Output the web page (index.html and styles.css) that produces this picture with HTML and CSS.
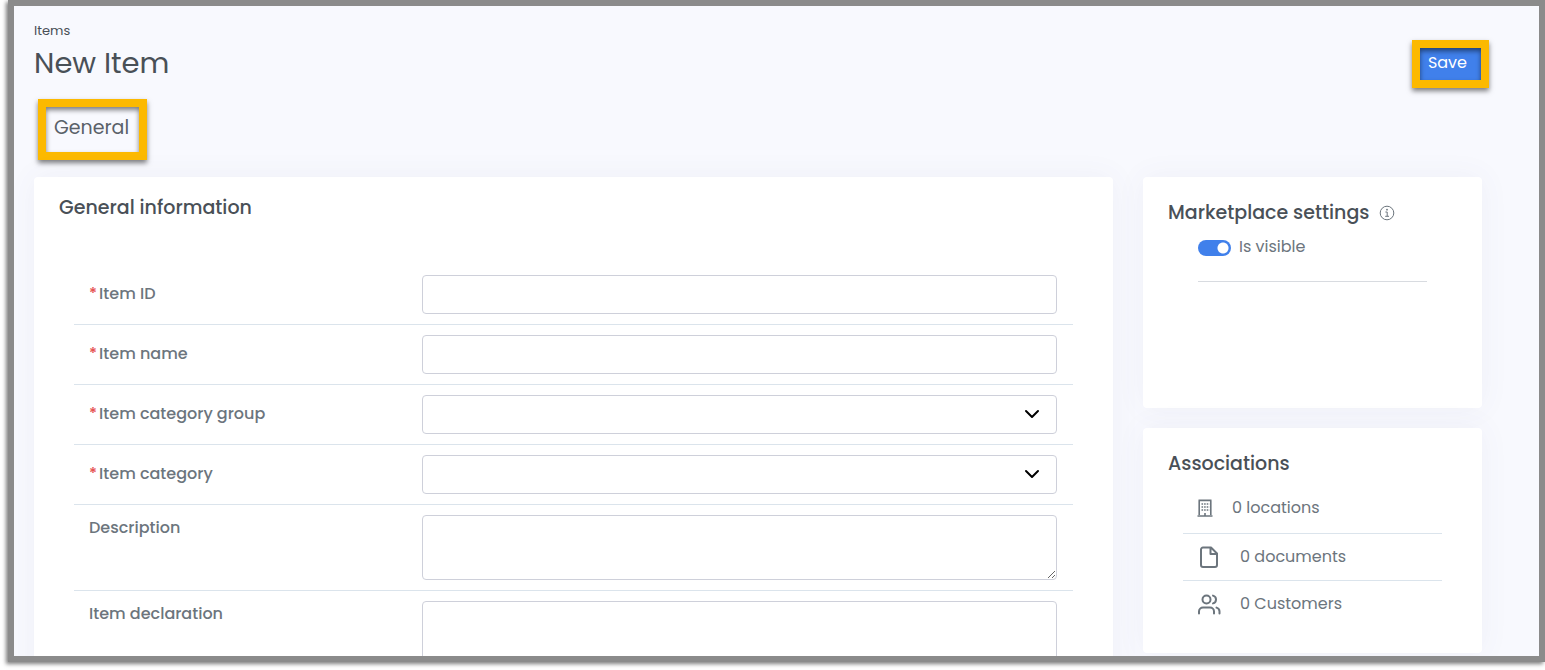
FILE: index.html
```html
<!DOCTYPE html>
<html lang="en">
<head>
  <meta charset="utf-8">
  <meta name="viewport" content="width=device-width, initial-scale=1">
  <title>New Item</title>
  <link rel="stylesheet" href="styles.css">
</head>
<body>
  <div class="frame">
    <header class="page-header">
      <div>
        <a class="breadcrumb" href="#">Items</a>
        <h1 class="page-title">New Item</h1>
      </div>
      <button class="save highlight" type="submit" form="item-form">Save</button>
    </header>

    <nav class="tabs">
      <a class="tab highlight" href="#general">General</a>
    </nav>

    <main class="content">
      <section class="card card-main" id="general">
        <h2 class="card-title">General information</h2>
        <form class="form" id="item-form">
          <div class="row required">
            <label class="label" for="item-id"><span class="star">*</span>Item ID</label>
            <div class="field"><input class="control" id="item-id" type="text"></div>
          </div>
          <div class="row required">
            <label class="label" for="item-name"><span class="star">*</span>Item name</label>
            <div class="field"><input class="control" id="item-name" type="text"></div>
          </div>
          <div class="row required">
            <label class="label" for="item-group"><span class="star">*</span>Item category group</label>
            <div class="field">
              <select class="control" id="item-group"><option></option></select>
              <svg class="chevron" viewBox="0 0 16 16" aria-hidden="true"><path d="M2 5l6 6 6-6"/></svg>
            </div>
          </div>
          <div class="row required">
            <label class="label" for="item-category"><span class="star">*</span>Item category</label>
            <div class="field">
              <select class="control" id="item-category"><option></option></select>
              <svg class="chevron" viewBox="0 0 16 16" aria-hidden="true"><path d="M2 5l6 6 6-6"/></svg>
            </div>
          </div>
          <div class="row">
            <label class="label" for="description">Description</label>
            <div class="field"><textarea class="control area" id="description"></textarea></div>
          </div>
          <div class="row">
            <label class="label" for="declaration">Item declaration</label>
            <div class="field"><textarea class="control area" id="declaration"></textarea></div>
          </div>
        </form>
      </section>

      <aside class="side">
        <section class="card card-side card-market">
          <h2 class="card-title">Marketplace settings
            <svg class="info" viewBox="0 0 16 16" aria-hidden="true"><circle cx="8" cy="8" r="6.8"/><path d="M6.4 7h1.8v4.2M6.2 11.3h3.8"/><circle class="dot" cx="8" cy="4.7" r=".9"/></svg>
          </h2>
          <div class="setting">
            <input class="toggle" id="visible" type="checkbox" role="switch" checked>
            <label for="visible">Is visible</label>
          </div>
        </section>

        <section class="card card-side">
          <h2 class="card-title">Associations</h2>
          <ul class="links">
            <li class="link-row">
              <svg class="icon icon-small" viewBox="0 0 16 18" aria-hidden="true">
                <path d="M2.200 16V1.500h11.600V16M.500 17h15M1.500 1.200h13M8 17v-3"/>
                <path class="windows" d="M4.500 5h8M4.500 8h8M4.500 11h8"/>
              </svg>
              <a href="#">0 locations</a>
            </li>
            <li class="link-row">
              <svg class="icon" viewBox="0 0 24 24" aria-hidden="true"><path d="M14 2.500H6a2 2 0 0 0-2 2v15.500a2 2 0 0 0 2 2h12a2 2 0 0 0 2-2V8.500zM13.500 2.500v6.500H20"/></svg>
              <a href="#">0 documents</a>
            </li>
            <li class="link-row">
              <svg class="icon" viewBox="0 0 24 24" aria-hidden="true"><path d="M17 21.500v-2a4 4 0 0 0-4-4H6a4 4 0 0 0-4 4v2M22.500 21.500v-2a4 4 0 0 0-3-3.870M16 3.630a4 4 0 0 1 0 7.750"/><circle cx="9.500" cy="7.500" r="4"/></svg>
              <a href="#">0 Customers</a>
            </li>
          </ul>
        </section>
      </aside>
    </main>
  </div>
</body>
</html>
```
FILE: styles.css
```css
* {
  box-sizing: border-box;
}

body {
  margin: 0;
  padding: 0 0 8px 8px;
  height: 100vh;
  overflow: hidden;
  background: #fff;
  color: #6c757d;
  font-family: Poppins, Inter, sans-serif;
  font-size: 16px;
  line-height: 24px;
}

a {
  color: inherit;
  text-decoration: none;
}

.frame {
  height: 100%;
  overflow: hidden;
  padding: 15px 50px 0 20px;
  border: 6px solid #8b8b8b;
  background: #f8f9fe;
  box-shadow: -2px 2px 4px rgba(0, 0, 0, 0.5);
}

.page-header {
  display: flex;
  justify-content: space-between;
  align-items: flex-end;
}

.breadcrumb {
  display: block;
  color: #495057;
  font-size: 13px;
  line-height: 20px;
}

.page-title {
  margin: 2px 0 0;
  color: #495057;
  font-size: 29px;
  font-weight: 400;
  line-height: 40px;
}

.highlight {
  border: 8px solid #fcb900;
  box-shadow: 0 3px 5px rgba(0, 0, 0, 0.5), inset 0 3px 5px rgba(0, 0, 0, 0.5);
}

.save {
  margin-bottom: -5px;
  padding: 0 14px 2px 8px;
  height: 48px;
  background: #4080eb;
  color: #fff;
  font: inherit;
}

.tabs {
  display: flex;
  padding: 16px 4px 17px;
}

.tab {
  padding: 6px 10px 9px 8px;
  color: #5a6169;
  font-size: 19px;
  line-height: 30px;
}

.content {
  display: flex;
  align-items: flex-start;
  gap: 30px;
  padding-right: 7px;
}

.card {
  border-radius: 4px;
  background: #fff;
  box-shadow: 0 0 30px rgba(80, 90, 130, 0.06);
}

.card-main {
  flex: 1;
  padding: 16px 40px 20px;
}

.card-title {
  display: flex;
  align-items: center;
  gap: 8px;
  margin: 0;
  color: #495057;
  font-size: 19px;
  font-weight: 500;
  line-height: 30px;
}

.card-main .card-title {
  margin: 0 0 42px -15px;
}

.row {
  display: grid;
  grid-template-columns: 1fr 2fr;
  border-bottom: 1px solid #dbe4ec;
}

.label {
  padding: 11px 15px;
  font-weight: 500;
}

.required .label {
  padding-top: 17px;
}

.star {
  margin-right: 2px;
  color: #e55353;
}

.field {
  position: relative;
  padding: 10px 16px 10px 15px;
}

.control {
  display: block;
  width: 100%;
  height: 39px;
  padding: 6px 12px;
  border: 1px solid #ced0da;
  border-radius: 4px;
  background: #fff;
  color: #495057;
  font: inherit;
  appearance: none;
}

.area {
  height: 65px;
  resize: vertical;
}

.chevron {
  position: absolute;
  top: 21px;
  right: 33px;
  width: 16px;
  height: 16px;
  fill: none;
  stroke: #000;
  stroke-width: 2;
  stroke-linecap: round;
  stroke-linejoin: round;
  pointer-events: none;
}

.side {
  display: grid;
  gap: 20px;
  width: 339px;
}

.card-side {
  padding: 21px 40px 26px 25px;
}

.card-market {
  min-height: 231px;
}

.info {
  width: 16px;
  height: 16px;
  margin-left: 2px;
  fill: none;
  stroke: #6c757d;
}

.info .dot {
  fill: #6c757d;
  stroke: none;
}

.setting {
  display: flex;
  align-items: center;
  gap: 8px;
  margin: 7px 15px 0 30px;
  padding-bottom: 22px;
  border-bottom: 1px solid #d8dbe0;
}

.toggle {
  width: 33px;
  height: 16px;
  margin: 1px 0 0;
  border-radius: 8px;
  background: #4080eb radial-gradient(circle at 25px 8px, #fff 5px, transparent 6px);
  appearance: none;
}

.links {
  margin: 8px 0 0;
  padding: 0 0 0 15px;
  list-style: none;
}

.link-row {
  display: flex;
  align-items: center;
  gap: 19px;
  height: 47px;
  padding-left: 14px;
}

.link-row:first-child {
  height: 46px;
  padding-bottom: 4px;
}

.link-row + .link-row {
  border-top: 1px solid #dbe4ec;
}

.icon {
  width: 24px;
  height: 24px;
  fill: none;
  stroke: #6c757d;
  stroke-width: 2;
  stroke-linecap: round;
  stroke-linejoin: round;
}

.icon-small {
  width: 16px;
  height: 18px;
  stroke-width: 1.6;
  stroke-linecap: butt;
}

.windows {
  stroke-dasharray: 1.600 1;
}
```
